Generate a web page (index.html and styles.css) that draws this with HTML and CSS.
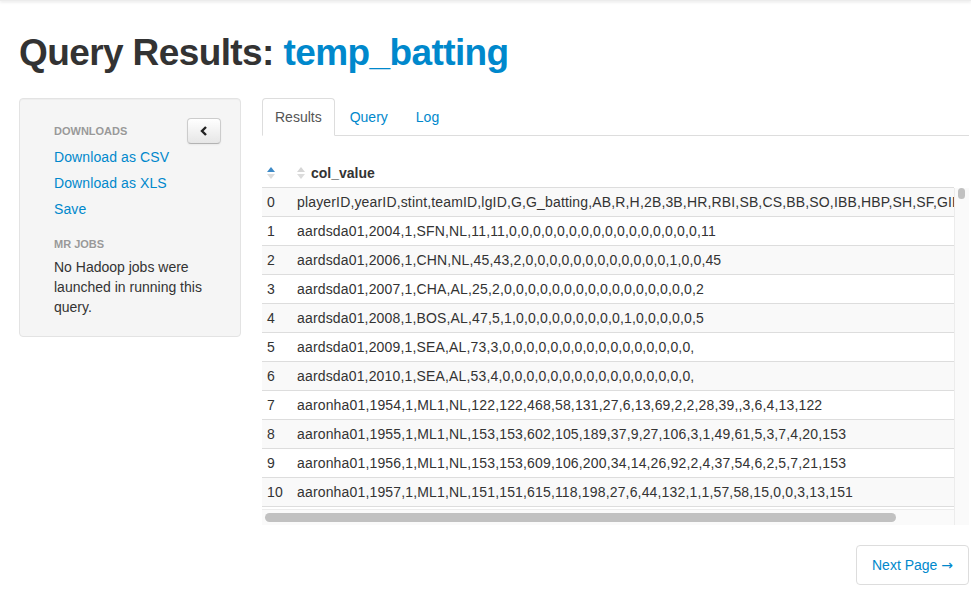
FILE: index.html
```html
<!DOCTYPE html>
<html>
<head>
<meta charset="utf-8">
<title>Query Results</title>
<link rel="stylesheet" href="styles.css">
</head>
<body>
<div class="topbar"></div>
<div class="container">
  <h1 class="title">Query Results: <span class="title-table">temp_batting</span></h1>
  <div class="layout">
    <aside class="sidebar">
      <div class="side-head">
        <span class="nav-header">Downloads</span>
        <button class="collapse-btn" type="button" aria-label="Collapse">
          <svg width="8" height="10" viewBox="0 0 8 10"><path d="M6 1 L2 5 L6 9" fill="none" stroke="#222" stroke-width="2.4" stroke-linejoin="miter"/></svg>
        </button>
      </div>
      <a class="side-link" href="#">Download as CSV</a>
      <a class="side-link" href="#">Download as XLS</a>
      <a class="side-link" href="#">Save</a>
      <div class="nav-header mr">MR Jobs</div>
      <p class="side-text">No Hadoop jobs were launched in running this query.</p>
    </aside>
    <main class="main">
      <ul class="tabs">
        <li class="tab active"><a href="#">Results</a></li>
        <li class="tab"><a href="#">Query</a></li>
        <li class="tab"><a href="#">Log</a></li>
      </ul>
      <table class="grid head">
        <thead>
          <tr>
            <th class="idx"><svg class="sort" width="8" height="14" viewBox="0 0 8 14"><path d="M0 6 L4 1 L8 6 Z" fill="#3e8ac7"/><path d="M0 8 L8 8 L4 13 Z" fill="#dcdcdc"/></svg></th>
            <th><span class="th-inner"><svg class="sort" width="8" height="14" viewBox="0 0 8 14"><path d="M0 6 L4 1 L8 6 Z" fill="#d6d6d6"/><path d="M0 8 L8 8 L4 13 Z" fill="#dcdcdc"/></svg>col_value</span></th>
          </tr>
        </thead>
      </table>
      <div class="scroller">
        <div class="viewport">
          <table class="grid body">
            <tbody>
              <tr><td class="idx">0</td><td>playerID,yearID,stint,teamID,lgID,G,G_batting,AB,R,H,2B,3B,HR,RBI,SB,CS,BB,SO,IBB,HBP,SH,SF,GIDP,G_old</td></tr>
              <tr><td class="idx">1</td><td>aardsda01,2004,1,SFN,NL,11,11,0,0,0,0,0,0,0,0,0,0,0,0,0,0,0,0,11</td></tr>
              <tr><td class="idx">2</td><td>aardsda01,2006,1,CHN,NL,45,43,2,0,0,0,0,0,0,0,0,0,0,0,0,1,0,0,45</td></tr>
              <tr><td class="idx">3</td><td>aardsda01,2007,1,CHA,AL,25,2,0,0,0,0,0,0,0,0,0,0,0,0,0,0,0,0,2</td></tr>
              <tr><td class="idx">4</td><td>aardsda01,2008,1,BOS,AL,47,5,1,0,0,0,0,0,0,0,0,0,1,0,0,0,0,0,5</td></tr>
              <tr><td class="idx">5</td><td>aardsda01,2009,1,SEA,AL,73,3,0,0,0,0,0,0,0,0,0,0,0,0,0,0,0,0,</td></tr>
              <tr><td class="idx">6</td><td>aardsda01,2010,1,SEA,AL,53,4,0,0,0,0,0,0,0,0,0,0,0,0,0,0,0,0,</td></tr>
              <tr><td class="idx">7</td><td>aaronha01,1954,1,ML1,NL,122,122,468,58,131,27,6,13,69,2,2,28,39,,3,6,4,13,122</td></tr>
              <tr><td class="idx">8</td><td>aaronha01,1955,1,ML1,NL,153,153,602,105,189,37,9,27,106,3,1,49,61,5,3,7,4,20,153</td></tr>
              <tr><td class="idx">9</td><td>aaronha01,1956,1,ML1,NL,153,153,609,106,200,34,14,26,92,2,4,37,54,6,2,5,7,21,153</td></tr>
              <tr><td class="idx">10</td><td>aaronha01,1957,1,ML1,NL,151,151,615,118,198,27,6,44,132,1,1,57,58,15,0,0,3,13,151</td></tr>
              <tr><td class="idx">11</td><td>aaronha01,1958,1,ML1,NL,153,153,601,109,196,34,4,30,95,4,1,59,49,16,1,0,3,21,153</td></tr>
            </tbody>
          </table>
        </div>
        <div class="vscroll"><div class="vthumb"></div></div>
        <div class="hscroll"><div class="hthumb"></div></div>
      </div>
      <div class="pager">
        <a class="next" href="#">Next Page <span class="arrow">→</span></a>
      </div>
    </main>
  </div>
</div>
</body>
</html>
```

FILE: styles.css
```css
* { box-sizing: border-box; }

html, body {
  margin: 0;
  background: #fff;
}

body {
  font-family: "Liberation Sans", Arial, Helvetica, sans-serif;
  font-size: 14px;
  line-height: 20px;
  color: #333;
  overflow: hidden;
}

a { color: #0088cc; text-decoration: none; }

.topbar {
  height: 1px;
  background: #ececec;
  box-shadow: 0 1px 3px rgba(0, 0, 0, 0.18);
}

.container {
  padding: 0 2px 0 19px;
}

.title {
  margin: 32px 0 0 0;
  font-size: 37px;
  line-height: 40px;
  font-weight: bold;
  color: #333;
  letter-spacing: -0.6px;
}

.title-table { color: #0088cc; }

.layout {
  display: flex;
  align-items: flex-start;
  gap: 21px;
  margin-top: 25px;
}

/* Sidebar */
.sidebar {
  flex: 0 0 222px;
  background: #f5f5f5;
  border: 1px solid #e3e3e3;
  border-radius: 4px;
  padding: 19px 19px 19px 34px;
  box-shadow: inset 0 1px 1px rgba(0, 0, 0, 0.03);
}

.side-head {
  display: flex;
  justify-content: space-between;
  align-items: center;
  height: 26px;
}

.nav-header {
  font-size: 11px;
  font-weight: bold;
  line-height: 20px;
  color: #999;
  text-transform: uppercase;
  text-shadow: 0 1px 0 rgba(255, 255, 255, 0.5);
}

.collapse-btn {
  width: 34px;
  height: 26px;
  padding: 0;
  display: flex;
  align-items: center;
  justify-content: center;
  background: linear-gradient(#ffffff, #e6e6e6);
  border: 1px solid #cccccc;
  border-bottom-color: #b3b3b3;
  border-radius: 4px;
  box-shadow: inset 0 1px 0 rgba(255, 255, 255, 0.2), 0 1px 2px rgba(0, 0, 0, 0.05);
}

.side-link {
  display: block;
  padding: 3px 0;
  line-height: 20px;
  letter-spacing: 0.1px;
}

.nav-header.mr {
  margin-top: 12px;
}

.side-text {
  margin: 3px 0 0 0;
  line-height: 20px;
}

/* Main */
.main {
  flex: 1;
  min-width: 0;
}

.tabs {
  list-style: none;
  margin: 0;
  padding: 0;
  display: flex;
  border-bottom: 1px solid #ddd;
  height: 38px;
}

.tab { margin-right: 2px; margin-bottom: -1px; }

.tab a {
  display: block;
  padding: 8px 12px;
  line-height: 20px;
  border: 1px solid transparent;
  border-radius: 4px 4px 0 0;
}

.tab.active a {
  color: #555;
  background: #fff;
  border-color: #ddd #ddd transparent;
}

.grid {
  border-collapse: collapse;
  border-spacing: 0;
}

.grid th, .grid td {
  padding: 4px 5px;
  line-height: 20px;
  text-align: left;
  white-space: nowrap;
  vertical-align: top;
}

.grid .idx { width: 30px; }

.head {
  margin-top: 23px;
  width: calc(100% - 15px);
}

.head th {
  font-weight: bold;
  border-bottom: 1px solid #ddd;
}

.sort { display: block; margin-top: 3px; }

.th-inner {
  display: flex;
  align-items: flex-start;
  gap: 6px;
}

.scroller {
  display: grid;
  grid-template-columns: 1fr 15px;
  grid-template-rows: 321px 16px;
}

.viewport {
  overflow: hidden;
}

.body {
  width: max-content;
  min-width: 100%;
}

.body td { letter-spacing: 0.16px; }

.body tr + tr td { border-top: 1px solid #ddd; }

.body tr:nth-child(odd) td { background: #f9f9f9; }

.vscroll {
  grid-row: 1 / span 2;
  grid-column: 2;
  background: #fafafa;
  border-left: 1px solid #ececec;
  padding: 0 3px 0 3px;
}

.vthumb {
  width: 7px;
  height: 11px;
  border-radius: 4px;
  background: #c1c1c1;
}

.hscroll {
  grid-row: 2;
  grid-column: 1;
  background: #fafafa;
  border-top: 1px solid #ececec;
  padding: 3px 0 0 3px;
}

.hthumb {
  width: 631px;
  height: 9px;
  border-radius: 5px;
  background: #c1c1c1;
}

.pager {
  display: flex;
  justify-content: flex-end;
  margin-top: 20px;
}

.next {
  display: block;
  padding: 9px 15px;
  line-height: 20px;
  border: 1px solid #ddd;
  border-radius: 4px;
  background: #fff;
}

.arrow {
  font-family: "DejaVu Sans", sans-serif;
  font-size: 14px;
}
```
